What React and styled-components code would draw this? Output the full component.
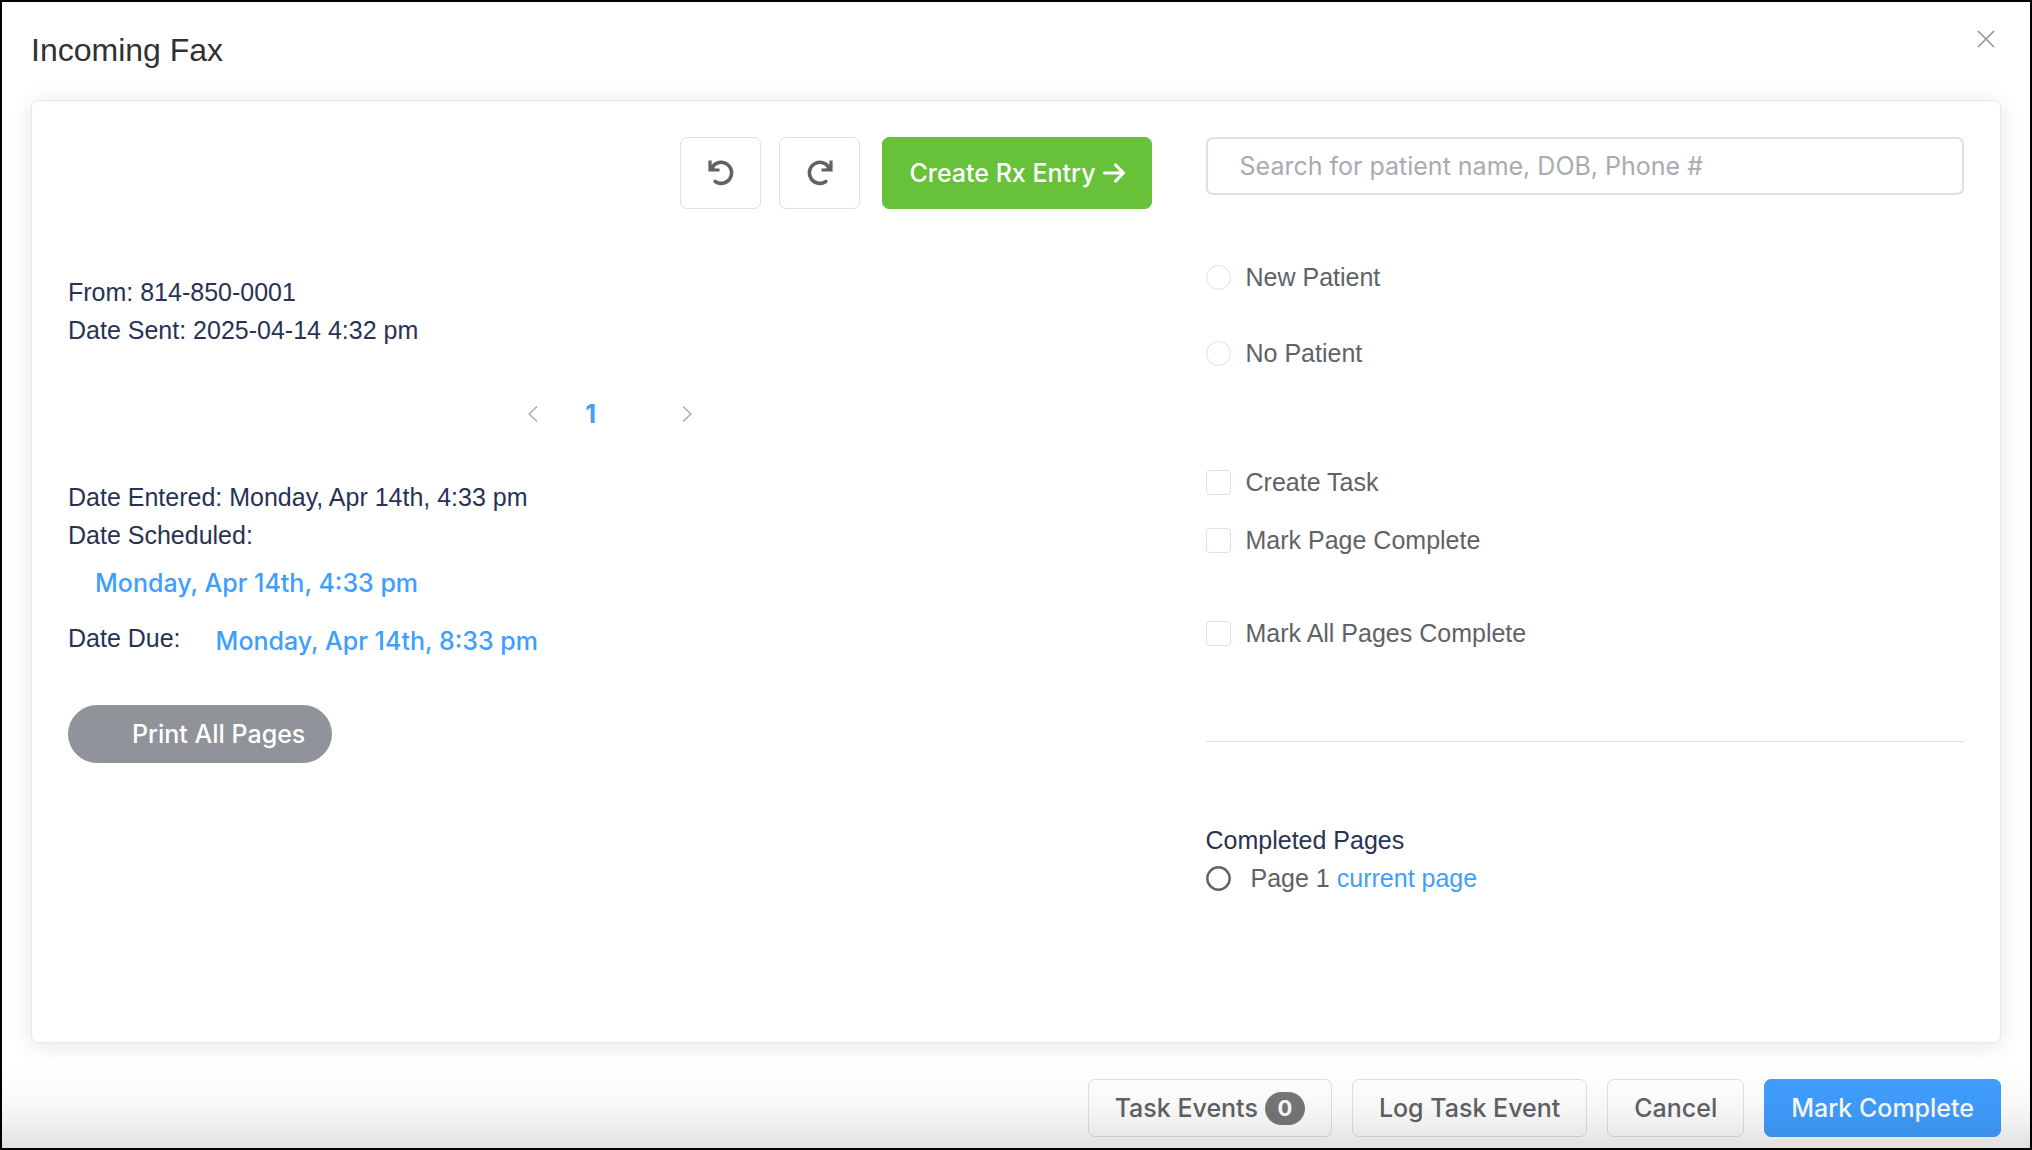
import React from "react";
import styled, { createGlobalStyle } from "styled-components";

const GlobalStyle = createGlobalStyle`
  *, *::before, *::after { box-sizing: border-box; }
  body { margin: 0; background: #fff; }
`;

const bodyFont = `"Liberation Sans", Helvetica, Arial, sans-serif`;
const uiFont = `Inter, "Liberation Sans", sans-serif`;

const Dialog = styled.main`
  position: relative;
  display: flex;
  flex-direction: column;
  min-height: 100vh;
  padding: 28px 29px 11px;
  border: 2px solid #000;
  background: #fff;
  color: #606266;
  font: 25px/38px ${bodyFont};
`;

const BottomShade = styled.div`
  position: absolute;
  inset: auto 0 0;
  height: 84px;
  pointer-events: none;
  background: linear-gradient(
    rgba(0, 0, 0, 0),
    rgba(0, 0, 0, 0.02) 40%,
    rgba(0, 0, 0, 0.06) 70%,
    rgba(0, 0, 0, 0.12)
  );
`;

const Header = styled.header`
  display: flex;
  justify-content: space-between;
  align-items: flex-start;
  height: 70px;
`;

const Title = styled.h1`
  margin: 0;
  color: #303133;
  font-size: 32px;
  font-weight: 400;
  line-height: 40px;
`;

const CloseButton = styled.button`
  display: flex;
  margin-right: 6px;
  padding: 0;
  border: 0;
  background: none;
  color: #909399;
  cursor: pointer;
`;

const Card = styled.section`
  display: grid;
  grid-template-columns: minmax(0, 10fr) minmax(0, 7fr);
  column-gap: 54px;
  flex: 1;
  padding: 36px;
  border: 1px solid #e4e7ed;
  border-radius: 7px;
  background: #fff;
  box-shadow: 0 3px 22px rgba(0, 0, 0, 0.1);
`;

const Column = styled.div`
  display: flex;
  flex-direction: column;
  align-items: stretch;
`;

const Button = styled.button`
  display: inline-flex;
  align-items: center;
  justify-content: center;
  gap: 7px;
  height: ${(p) => (p.$tall ? 72 : 58)}px;
  padding: 0 26px;
  border: 1px solid ${(p) => p.$fill || "#dcdfe6"};
  border-radius: ${(p) => (p.$round ? 29 : 7)}px;
  background: ${(p) => p.$fill || "transparent"};
  color: ${(p) => (p.$fill ? "#fff" : "#606266")};
  font: 500 25px/38px ${uiFont};
  white-space: nowrap;
  cursor: pointer;
`;

const Toolbar = styled.div`
  display: flex;
  justify-content: flex-end;
  gap: 18px;
`;

const IconButton = styled(Button)`
  width: 81px;
  padding: 0;
`;

const RxButton = styled(Button)`
  margin-left: 4px;
`;

const Details = styled.div`
  margin-top: ${(p) => p.$top}px;
  color: #283353;
`;

const DueRow = styled.div`
  display: flex;
  align-items: center;
  gap: 8px;
`;

const DueLabel = styled.span`
  padding-bottom: 7px;
`;

const DateButton = styled.button`
  display: block;
  height: 58px;
  padding: 0 27px;
  border: 0;
  background: none;
  color: #409eff;
  font: 500 25px/58px ${uiFont};
  cursor: pointer;
`;

const Pager = styled.nav`
  display: flex;
  justify-content: center;
  margin-top: 46px;
`;

const PagerButton = styled.button`
  display: flex;
  align-items: center;
  justify-content: center;
  width: 58px;
  height: 38px;
  margin-left: ${(p) => (p.$apart ? 38 : 0)}px;
  padding: 0;
  border: 0;
  background: none;
  color: ${(p) => (p.$current ? "#409eff" : "#a8abb2")};
  font: 700 25px/38px ${uiFont};
`;

const PrintButton = styled(Button)`
  align-self: flex-start;
  margin-top: 35px;
  padding-left: 63px;
`;

const SearchInput = styled.input`
  width: 100%;
  height: 58px;
  padding: 0 32px;
  border: 2px solid #dcdfe6;
  border-radius: 7px;
  background: #fff;
  color: #606266;
  font: 25px/54px ${uiFont};
  &::placeholder { color: #a8abb2; opacity: 1; }
`;

const Options = styled.div`
  display: flex;
  flex-direction: column;
  gap: ${(p) => p.$gap}px;
  margin-top: ${(p) => p.$top}px;
`;

const Option = styled.label`
  display: flex;
  align-items: center;
  gap: 15px;
`;

const Tick = styled.input`
  appearance: none;
  width: 25px;
  height: 25px;
  margin: 0;
  border: 1px solid #dcdfe6;
  border-radius: ${(p) => (p.type === "radio" ? "50%" : "4px")};
  background: #fff;
`;

const Divider = styled.hr`
  width: 100%;
  margin: 89px 0 79px;
  border: 0;
  border-top: 1px solid #dcdfe6;
`;

const SectionTitle = styled.h2`
  margin: 0;
  color: #283353;
  font-size: 25px;
  font-weight: 400;
`;

const PageRow = styled.div`
  display: flex;
  align-items: center;
  gap: 7px;
`;

const PageMark = styled.svg`
  margin-right: 13px;
`;

const PageLink = styled.a`
  color: #409eff;
  text-decoration: none;
`;

const Footer = styled.footer`
  display: flex;
  justify-content: flex-end;
  gap: 20px;
  padding-top: 36px;
`;

const Badge = styled.span`
  display: inline-flex;
  align-items: center;
  justify-content: center;
  width: 40px;
  height: 33px;
  border-radius: 17px;
  background: #777;
  color: #fff;
  font-weight: 700;
  font-size: 22px;
`;

const RotateIcon = ({ flip }) => (
  <svg width="26" height="26" viewBox="0 0 26 26" fill="none" stroke="currentColor" aria-hidden="true">
    <g transform={flip ? "translate(26 0) scale(-1 1)" : undefined}>
      <path d="M4.4 7A10.5 10.5 0 1 1 7.2 21.5" strokeWidth="3.6" strokeLinecap="round" />
      <path d="M2 .5V10H11.5" strokeWidth="3.2" />
      <path d="M2 10.4V3.5L8.8 10.4Z" fill="currentColor" stroke="none" />
    </g>
  </svg>
);

const Chevron = ({ right }) => (
  <svg width="10" height="16" viewBox="0 0 10 16" fill="none" stroke="currentColor" strokeWidth="1.5" aria-hidden="true">
    <path d={right ? "M1 .5L9 8L1 15.5" : "M9 .5L1 8L9 15.5"} />
  </svg>
);

export default function App() {
  return (
    <>
      <GlobalStyle />
      <Dialog>
        <Header>
          <Title>Incoming Fax</Title>
          <CloseButton aria-label="Close">
            <svg width="18" height="18" viewBox="0 0 18 18" fill="none" stroke="currentColor" strokeWidth="1.6">
              <path d="M1 1L17 17M17 1L1 17" />
            </svg>
          </CloseButton>
        </Header>

        <Card>
          <Column>
            <Toolbar>
              <IconButton $tall aria-label="Rotate left"><RotateIcon /></IconButton>
              <IconButton $tall aria-label="Rotate right"><RotateIcon flip /></IconButton>
              <RxButton $tall $fill="#67c23a">
                Create Rx Entry
                <svg width="22" height="20" viewBox="0 0 22 20" fill="none" stroke="currentColor" strokeWidth="3.2" strokeLinecap="round" strokeLinejoin="round" aria-hidden="true">
                  <path d="M1.6 10H20M12.6 2L20.4 10L12.6 18" />
                </svg>
              </RxButton>
            </Toolbar>

            <Details $top={64}>
              <div>From: 814-850-0001</div>
              <div>Date Sent: 2025-04-14 4:32 pm</div>
            </Details>

            <Pager aria-label="Pages">
              <PagerButton aria-label="Previous page"><Chevron /></PagerButton>
              <PagerButton $current aria-current="page">1</PagerButton>
              <PagerButton $apart aria-label="Next page"><Chevron right /></PagerButton>
            </Pager>

            <Details $top={45}>
              <div>Date Entered: Monday, Apr 14th, 4:33 pm</div>
              <div>Date Scheduled:</div>
              <DateButton>Monday, Apr 14th, 4:33 pm</DateButton>
              <DueRow>
                <DueLabel>Date Due:</DueLabel>
                <DateButton>Monday, Apr 14th, 8:33 pm</DateButton>
              </DueRow>
            </Details>

            <PrintButton $round $fill="#909399">Print All Pages</PrintButton>
          </Column>

          <Column>
            <SearchInput type="text" aria-label="Search for a patient" placeholder="Search for patient name, DOB, Phone #" />

            <Options $top={63} $gap={38}>
              <Option><Tick type="radio" name="patient" />New Patient</Option>
              <Option><Tick type="radio" name="patient" />No Patient</Option>
            </Options>

            <Options $top={91} $gap={20}>
              <Option><Tick type="checkbox" />Create Task</Option>
              <Option><Tick type="checkbox" />Mark Page Complete</Option>
            </Options>
            <Options $top={55} $gap={20}>
              <Option><Tick type="checkbox" />Mark All Pages Complete</Option>
            </Options>

            <Divider />

            <SectionTitle>Completed Pages</SectionTitle>
            <PageRow>
              <PageMark width="25" height="25" viewBox="0 0 25 25" fill="none" stroke="currentColor" strokeWidth="2.4" aria-hidden="true">
                <circle cx="12.5" cy="12.5" r="11.2" />
              </PageMark>
              <span>Page 1</span>
              <PageLink href="#page-1">current page</PageLink>
            </PageRow>
          </Column>
        </Card>

        <Footer>
          <Button>Task Events <Badge>0</Badge></Button>
          <Button>Log Task Event</Button>
          <Button>Cancel</Button>
          <Button $fill="#409eff">Mark Complete</Button>
        </Footer>
        <BottomShade />
      </Dialog>
    </>
  );
}
